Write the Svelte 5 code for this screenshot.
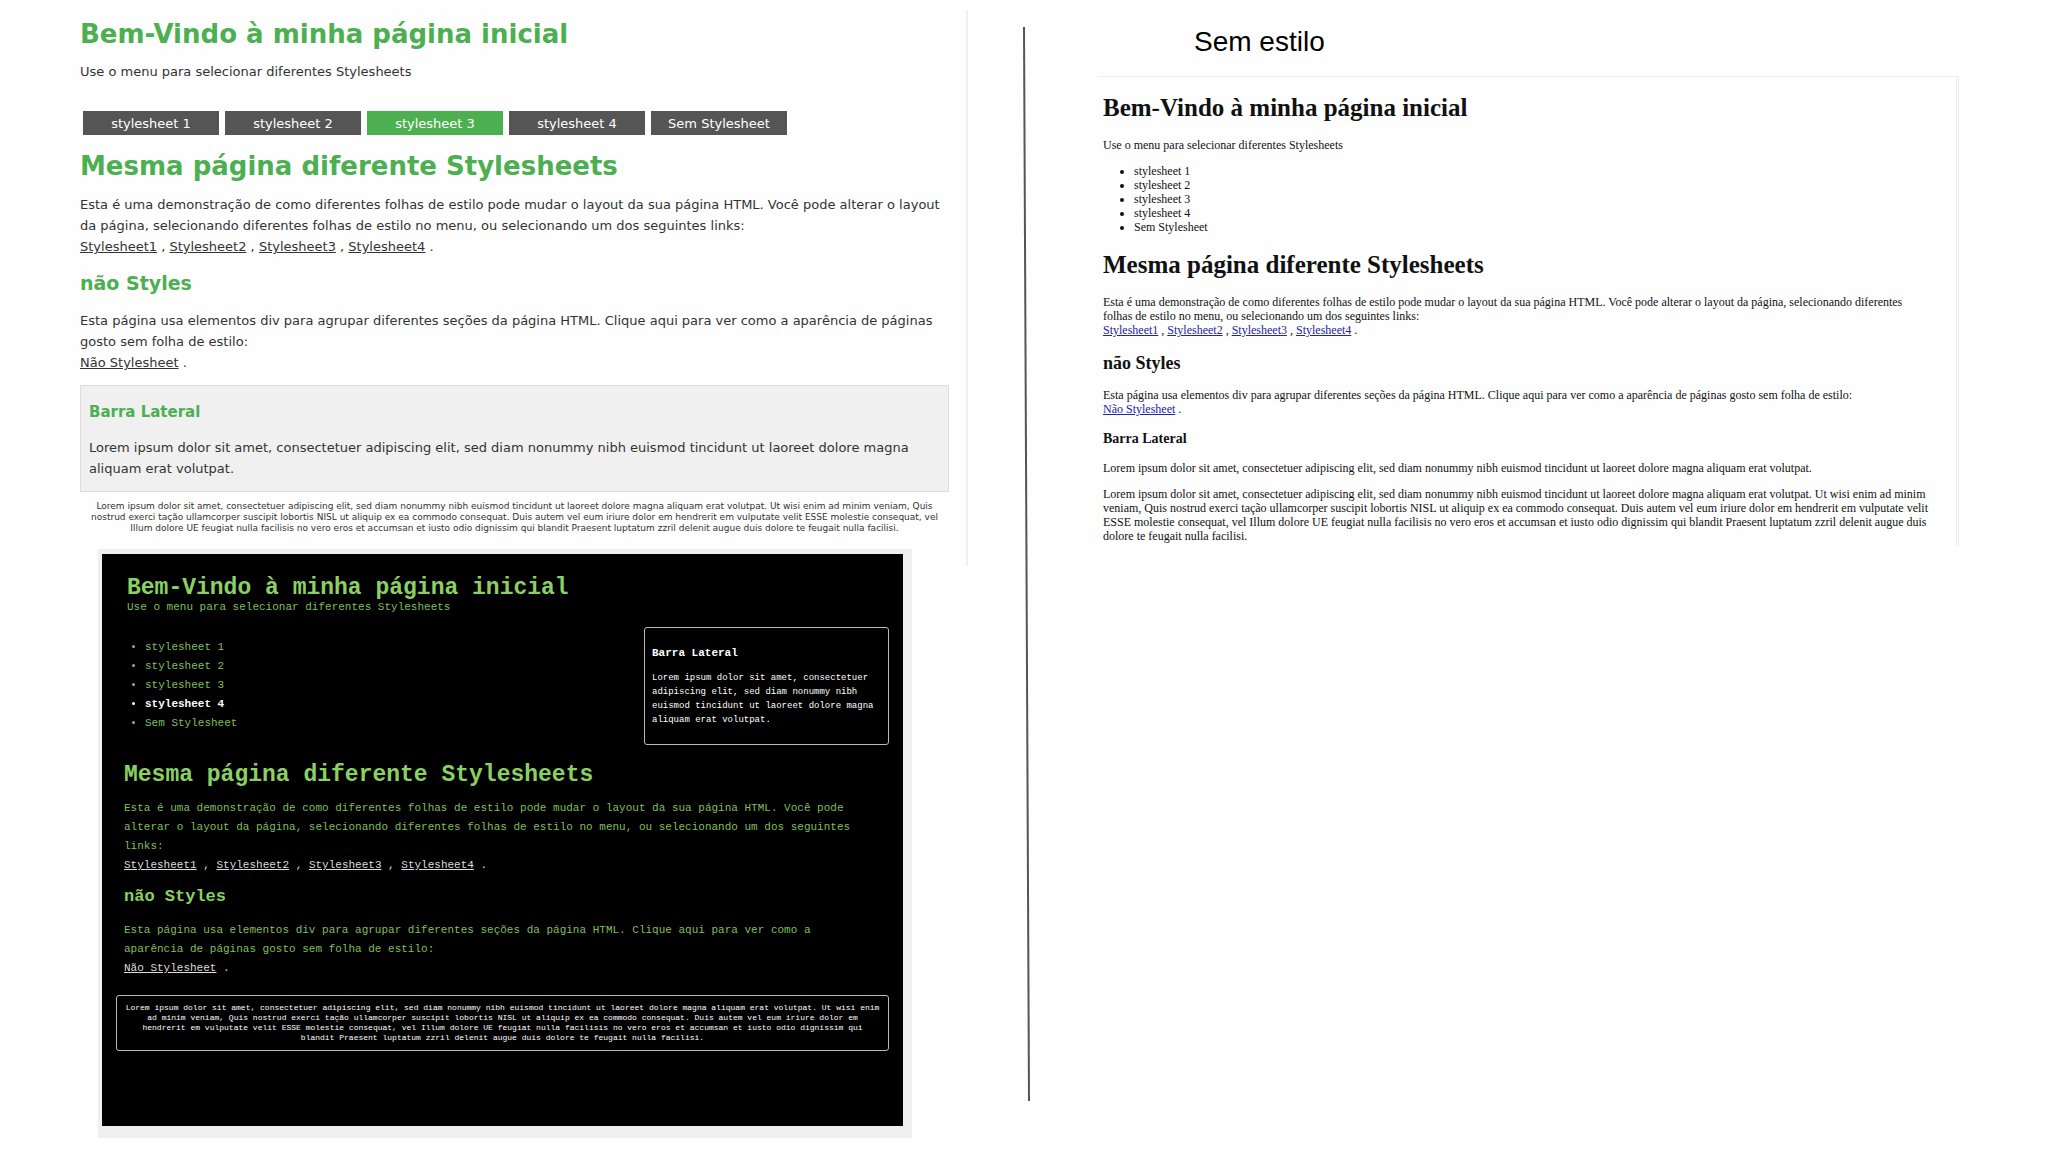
<script>
  const menu = ['stylesheet 1', 'stylesheet 2', 'stylesheet 3', 'stylesheet 4', 'Sem Stylesheet'];
  const links = ['Stylesheet1', 'Stylesheet2', 'Stylesheet3', 'Stylesheet4'];
  const lorem = 'Lorem ipsum dolor sit amet, consectetuer adipiscing elit, sed diam nonummy nibh euismod tincidunt ut laoreet dolore magna aliquam erat volutpat.';
  const footer = lorem + ' Ut wisi enim ad minim veniam, Quis nostrud exerci tação ullamcorper suscipit lobortis NISL ut aliquip ex ea commodo consequat. Duis autem vel eum iriure dolor em hendrerit em vulputate velit ESSE molestie consequat, vel Illum dolore UE feugiat nulla facilisis no vero eros et accumsan et iusto odio dignissim qui blandit Praesent luptatum zzril delenit augue duis dolore te feugait nulla facilisi.';
</script>

{#snippet header()}
  <header>
    <h1>Bem-Vindo à minha página inicial</h1>
    <p>Use o menu para selecionar diferentes Stylesheets</p>
  </header>
{/snippet}

{#snippet nav(active)}
  <ul class="menu">
    {#each menu as item, i}
      <li class:active={i === active}><button type="button">{item}</button></li>
    {/each}
  </ul>
{/snippet}

{#snippet main()}
  <div class="main">
    <h1>Mesma página diferente Stylesheets</h1>
    <p>
      Esta é uma demonstração de como diferentes folhas de estilo pode mudar o layout da sua página HTML. Você pode alterar o layout da página, selecionando diferentes folhas de estilo no menu, ou selecionando um dos seguintes links:<br />
      <span class="links">{#each links as link, i}<a href="#{link}">{link}</a>{i < links.length - 1 ? ' , ' : ' .'}{/each}</span>
    </p>
    <h2>não Styles</h2>
    <p>
      Esta página usa elementos div para agrupar diferentes seções da página HTML. Clique aqui para ver como a aparência de páginas gosto sem folha de estilo:<br />
      <span class="links"><a href="#sem">Não Stylesheet</a> .</span>
    </p>
  </div>
{/snippet}

{#snippet sidebar()}
  <aside>
    <h3>Barra Lateral</h3>
    <p>{lorem}</p>
  </aside>
{/snippet}

<div class="board">
  <div class="left">
    <section class="light">
      {@render header()}
      {@render nav(2)}
      {@render main()}
      {@render sidebar()}
      <footer>{footer}</footer>
    </section>

    <div class="frame">
      <section class="dark">
        {@render header()}
        <div class="row">
          {@render nav(3)}
          {@render sidebar()}
        </div>
        {@render main()}
        <footer>{footer}</footer>
      </section>
    </div>
  </div>

  <svg class="divider" viewBox="0 0 10 1000" preserveAspectRatio="none" aria-hidden="true">
    <line x1="5" y1="0" x2="10" y2="1000" vector-effect="non-scaling-stroke" />
  </svg>

  <div class="right">
    <div class="title">Sem estilo</div>
    <section class="plain">
      {@render header()}
      {@render nav(-1)}
      {@render main()}
      {@render sidebar()}
      <footer>{footer}</footer>
    </section>
  </div>
</div>

<style>
  :global(body) { margin: 0; background: #fefefe; }

  .board {
    display: grid;
    grid-template-columns: 1fr 10px 1fr;
  }
  h1, h2, h3, p, ul { margin: 0; padding: 0; }
  button {
    background: none; border: none; padding: 0; margin: 0;
    font: inherit; color: inherit; cursor: pointer;
  }

  .left { padding: 10px 51px 14px 80px; }

  /* stylesheet 3 */
  .light {
    padding: 7px 17px 32px 0;
    border-right: 2px solid #f0f0f0;
    font: 13px/21px Verdana, "DejaVu Sans", sans-serif;
    color: #333;
  }
  .light h1 { font-size: 26px; line-height: 34px; color: #4caf50; margin-bottom: 10px; }
  .light h2 { font-size: 19px; line-height: 24px; color: #4caf50; margin: 14px 0 15px; }
  .light h3 { font-size: 15px; line-height: 20px; color: #4caf50; margin-bottom: 15px; }
  .light a { color: inherit; }
  .light .menu {
    display: flex;
    gap: 6px;
    margin: 29px 0 14px 3px;
    list-style: none;
  }
  .light .menu button {
    display: block;
    width: 136px;
    height: 24px;
    background: #555;
    color: #fff;
  }
  .light .menu .active button { background: #4caf50; }
  .light .main h1 { margin-bottom: 11px; }
  .light aside {
    margin-top: 12px;
    padding: 16px 8px 12px;
    background: #f0f0f0;
    border: 1px solid #ddd;
  }
  .light footer {
    padding: 9px 6px 0;
    font-size: 9px;
    line-height: 11px;
    text-align: center;
  }

  /* stylesheet 4 */
  .frame {
    margin: -17px 56px 0 18px;
    padding: 5px 9px 12px 4px;
    background: #f0f0f0;
  }
  .dark {
    padding: 22px 14px 75px;
    background: #000;
    font: 11px/19px "Courier New", "Liberation Mono", monospace;
    color: #7fbf5f;
  }
  .dark h1 { font-size: 23px; line-height: 24px; color: #8ad163; }
  .dark h2 { font-size: 17px; line-height: 22px; color: #8ad163; margin: 11px 0 13px; }
  .dark header { padding-left: 11px; }
  .dark header p { line-height: 14px; }
  .dark .row {
    display: flex;
    justify-content: space-between;
    align-items: flex-start;
    margin-top: 13px;
  }
  .dark .menu { padding: 11px 0 0 29px; }
  .dark .menu .active { color: #fff; font-weight: bold; }
  .dark aside {
    box-sizing: border-box;
    width: 245px;
    padding: 17px 7px;
    border: 1px solid #bbb;
    border-radius: 3px;
    font-size: 9px;
    line-height: 14px;
    color: #fff;
  }
  .dark h3 { font-size: 11px; line-height: 16px; margin-bottom: 10px; }
  .dark .main { padding: 18px 14px 0 8px; }
  .dark .main h1 { margin-bottom: 12px; }
  .dark .links, .dark a { color: #ddd; }
  .dark footer {
    margin-top: 17px;
    padding: 7px;
    border: 1px solid #bbb;
    border-radius: 3px;
    font-size: 8px;
    line-height: 10px;
    text-align: center;
    color: #fff;
  }

  .divider {
    width: 10px;
    height: calc(100% - 78px);
    margin-top: 27px;
    overflow: visible;
  }
  .divider line { stroke: #555; stroke-width: 2px; }

  .right { padding: 25px 89px 0 69px; }
  .title {
    margin-bottom: 17px;
    padding-left: 96px;
    font: 28px/34px Arial, "Liberation Sans", sans-serif;
    color: #000;
  }

  /* no stylesheet */
  .plain {
    padding: 17px 22px 3px 5px;
    border: 1px solid #f0f0f0;
    border-width: 1px 3px 0 0;
    border-right-style: double;
    font: 12px/14px "Times New Roman", "Liberation Serif", serif;
    color: #111;
  }
  .plain h1 { font-size: 25px; line-height: 28px; margin-bottom: 16px; }
  .plain h2 { font-size: 18px; line-height: 22px; margin: 15px 0 14px; }
  .plain h3 { font-size: 14px; line-height: 16px; margin: 15px 0 14px; }
  .plain .menu { margin: 12px 0 17px; padding-left: 31px; }
  .plain a { color: #22a; }
  .plain footer { margin-top: 12px; }
</style>
